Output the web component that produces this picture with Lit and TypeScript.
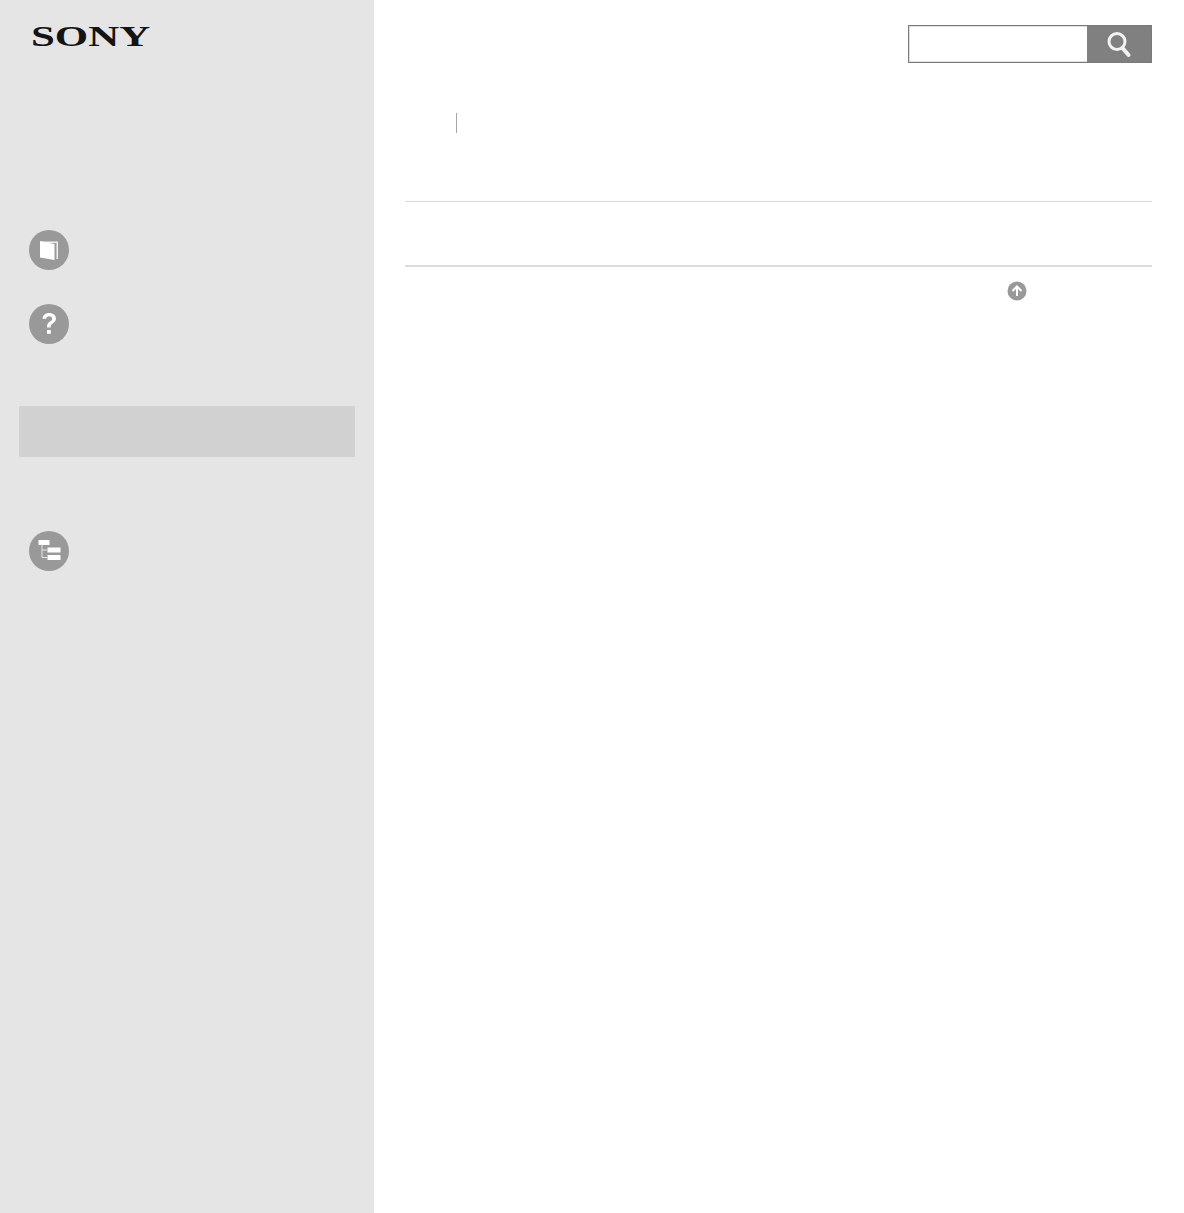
import { LitElement, html, css } from "lit";
import { customElement } from "lit/decorators.js";

@customElement("app-root")
export class AppRoot extends LitElement {
  static styles = css`
    :host { display: block; background: #fff; font-family: "Liberation Serif", serif; }
    .page { display: flex; min-height: 100vh; }
    .side { width: 374px; flex: none; background: #e5e5e5; box-sizing: border-box; padding-top: 19px; display: flex; flex-direction: column; }
    .logo { height: 34px; margin: 0 0 0 31px; color: #141414; font: bold 30px/34px "Liberation Serif", serif; transform: scaleX(1.43); transform-origin: 0 50%; white-space: nowrap; }
    .circle { display: block; width: 40px; height: 40px; margin-left: 29px; }
    .first { margin-top: 177px; }
    .second { margin-top: 34px; }
    .bar { margin: 62px 19px 0; height: 51px; background: #d1d1d1; border-radius: 1px; }
    .third { margin-top: 74px; }
    .main { flex: 1; box-sizing: border-box; padding: 25px 32px 0 31px; display: flex; flex-direction: column; }
    .search { display: flex; align-self: flex-end; width: 244px; height: 38px; box-sizing: border-box; border: 1px solid #7a7a7a; }
    .input { flex: 1; background: #fff; border: 1px solid #e0e0e0; border-width: 1px 0 1px 1px; }
    .btn { width: 64px; background: #808080; display: flex; align-items: center; justify-content: center; }
    .btn svg { display: block; }
    .crumb { margin: 50px 0 0 51px; width: 1px; height: 20px; background: #a6a6a6; }
    .rule1 { margin-top: 68px; height: 1px; background: #d9d9d9; }
    .rule2 { margin-top: 63px; height: 2px; background: #dcdcdc; }
    .up { display: block; margin: 14px 0 0 602px; width: 20px; height: 20px; }
  `;

  render() {
    return html`<div class="page">
      <aside class="side">
        <div class="logo">SONY</div>
        <svg class="circle first" viewBox="0 0 40 40">
          <circle cx="20" cy="20" r="20" fill="#999"/>
          <path d="M12 11.5 L29 11.5 L29 29 L27.5 29 L27.5 13 L17 13 Z" fill="#fff" opacity=".85"/>
          <path d="M11 11 L25.5 14 L25.5 30 L11 27.5 Z" fill="#fff"/>
        </svg>
        <svg class="circle second" viewBox="0 0 40 40">
          <circle cx="20" cy="20" r="20" fill="#999"/>
          <path d="M13.5 14.5 C14 10.5 17 9 20.2 9 C24 9 27 11.2 27 14.6 C27 17.4 25 18.6 23.3 19.8 C22 20.7 21.7 21.4 21.7 23.5 L18 23.5 C18 20.5 18.6 19.2 20.6 17.8 C22.2 16.7 23.2 16 23.2 14.7 C23.2 13.2 22 12.3 20.2 12.3 C18.4 12.3 17.4 13.2 17.1 15 Z" fill="#fff"/>
          <rect x="18" y="26" width="3.8" height="3.8" fill="#fff"/>
        </svg>
        <div class="bar"></div>
        <svg class="circle third" viewBox="0 0 40 40">
          <circle cx="20" cy="20" r="20" fill="#999"/>
          <rect x="9.500" y="9" width="11" height="5" fill="#fff"/>
          <rect x="18.500" y="16.500" width="13" height="5" fill="#fff"/>
          <rect x="18.500" y="24" width="13" height="5" fill="#fff"/>
          <path d="M13 14 V26.500 H18 M13 19 H18" fill="none" stroke="#e6e6e6" stroke-width="1"/>
        </svg>
      </aside>
      <main class="main">
        <div class="search">
          <div class="input"></div>
          <div class="btn">
            <svg width="26" height="28" viewBox="0 0 26 28">
              <circle cx="11" cy="11.500" r="8" fill="none" stroke="#f2f2f2" stroke-width="3"/>
              <path d="M16.500 18 L22.500 25" fill="none" stroke="#f2f2f2" stroke-width="4" stroke-linecap="round"/>
            </svg>
          </div>
        </div>
        <div class="crumb"></div>
        <div class="rule1"></div>
        <div class="rule2"></div>
        <svg class="up" viewBox="0 0 20 20">
          <circle cx="10" cy="10" r="9.500" fill="#999"/>
          <path d="M5.500 10 L10 5.500 L14.500 10 M10 6 V15" fill="none" stroke="#fff" stroke-width="2"/>
        </svg>
      </main>
    </div>`;
  }
}
